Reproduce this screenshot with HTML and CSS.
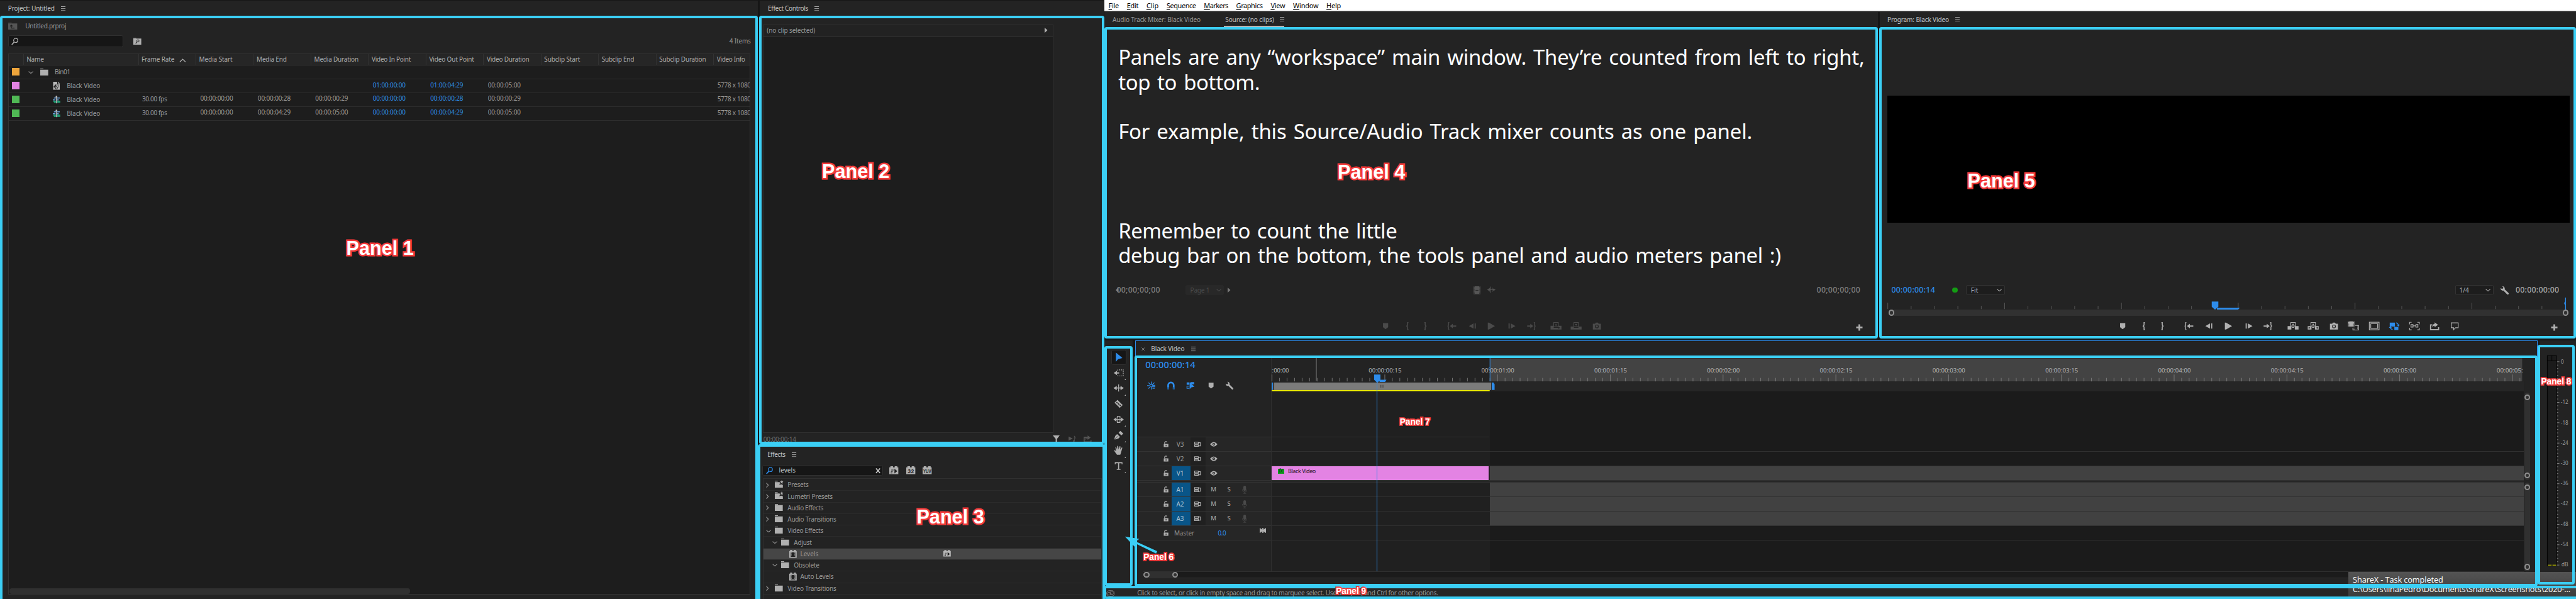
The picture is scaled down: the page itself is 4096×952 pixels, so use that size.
FILE: index.html
```html
<!DOCTYPE html>
<html lang="en">
<head>
<meta charset="utf-8">
<title>Workspace panels</title>
<link rel="stylesheet" href="styles.css">
</head>
<body>
<svg class="defs" width="0" height="0" aria-hidden="true">
  <symbol id="burger" viewBox="0 0 8 8"><path d="M0 .5h8M0 4h8M0 7.5h8" stroke="currentColor" stroke-width="1" fill="none"/></symbol>
  <symbol id="search" viewBox="0 0 12 13"><circle cx="7.6" cy="4.6" r="3.6" fill="none" stroke="currentColor" stroke-width="1.3"/><path d="M5 7.5L.8 12" stroke="currentColor" stroke-width="1.8"/></symbol>
  <symbol id="folder" viewBox="0 0 14 12"><path d="M0 0h5.500v1H0zM0 2h14v10H0z" fill="currentColor"/></symbol>
  <symbol id="folderstar" viewBox="0 0 15 13"><path d="M0 1.500h5v1H0zM0 3.500h8l1 1-1 4 3-1 3 1V13H0z" fill="currentColor"/><path d="M12 0l.9 2.300H15l-1.700 1.500.7 2.400-2-1.400-2 1.400.7-2.400L9 2.300h2.200z" fill="currentColor"/></symbol>
  <symbol id="folderup" viewBox="0 0 16 12"><path d="M0 0h6v1H0zM0 1.500h16V12H0z" fill="currentColor"/><path d="M5.500 4.500V9.500H11M3.500 6.300l2-2 2 2" stroke="#1d1d1d" stroke-width="1.300" fill="none"/></symbol>
  <symbol id="foldersearch" viewBox="0 0 14 12"><path d="M0 0h5v1H0zM0 1.500h14V12H0z" fill="currentColor"/><circle cx="8" cy="5.500" r="2" fill="none" stroke="#222"/><path d="M6.700 7L4 10" stroke="#222" stroke-width="1.300"/></symbol>
  <symbol id="down" viewBox="0 0 9 5"><path d="M.6.600l3.900 3.300L8.400.6" stroke="currentColor" stroke-width="1.200" fill="none"/></symbol>
  <symbol id="up" viewBox="0 0 12 7"><path d="M1 6l5-4.800L11 6" stroke="currentColor" stroke-width="1.500" fill="none"/></symbol>
  <symbol id="right" viewBox="0 0 5 9"><path d="M.6.600l3.500 3.900L.6 8.400" stroke="currentColor" stroke-width="1.200" fill="none"/></symbol>
  <symbol id="tri" viewBox="0 0 5 9"><path d="M0 0v9l5-4.500z" fill="currentColor"/></symbol>
  <symbol id="matte" viewBox="0 0 12 14"><path d="M0 0h7v4h4.500v10H0z" fill="currentColor"/><path d="M8.500 0v3H12z" fill="currentColor"/><path d="M1 9l3-4 1 1-2 4zM4 5.500h5M9 5v5" stroke="#222" fill="#222" stroke-width=".8"/><circle cx="5.500" cy="10.500" r="2" fill="none" stroke="#222" stroke-width="1.200"/></symbol>
  <symbol id="seq" viewBox="0 0 14 14"><path d="M2 4h4M8 4h5M0 7.500h5M8 7.500h3" stroke="#6da3dc" stroke-width="1.800"/><path d="M1 10h5M8 10h6M2 12.500h4M8 12.500h6" stroke="#25c48e" stroke-width="1.600"/><path d="M6.800 0v14" stroke="#ccc" stroke-width="1.500"/><path d="M5.300 0h3v3h-3z" fill="#bbb"/></symbol>
  <symbol id="brick" viewBox="0 0 16 14"><path d="M2 0h4.500v2h3V0H14v2h2v12H0V2h2z" fill="currentColor"/></symbol>
  <symbol id="brickfast" viewBox="0 0 16 14"><path d="M2 0h4.500v2h3V0H14v2h2v12H0V2h2z" fill="currentColor"/><path d="M9 4.500v8l5-4zM3.500 6h4v1.200h-4zM3 8.500h3v1.200H3zM2.500 11h3v1.200h-3z" fill="#222"/></symbol>
  <symbol id="leaf" viewBox="0 0 13 14"><path d="M1.500 0H5v2h3V0h3.500v2H13v12H0V2h1.500z" fill="currentColor"/><path d="M2.500 4h8v8h-8z" fill="#222"/><path d="M3.500 4.500v7M9.500 4.500v7" stroke="#aaa" stroke-dasharray="1.500 1"/></symbol>
  <symbol id="filter" viewBox="0 0 14 13"><path d="M0 0h12L7.300 6v6H5V6z" fill="currentColor"/><path d="M9.500 11.500H14" stroke="currentColor"/></symbol>
  <symbol id="playnote" viewBox="0 0 15 12"><path d="M0 2v8l8-4z" fill="currentColor"/><path d="M11 11V1c1 2.500 3 2 3 5" stroke="currentColor" fill="none"/><circle cx="10" cy="10.500" r="1.500" fill="currentColor"/></symbol>
  <symbol id="export" viewBox="0 0 16 14"><path d="M5 4H1v9h14V9.500" stroke="currentColor" stroke-width="2" fill="none"/><path d="M8 0l6 4.500-6 4.500V6.500H4.500v3h-1V3H8z" fill="currentColor"/></symbol>
  <symbol id="film" viewBox="0 0 12 14"><path d="M0 0h12v14H0z" fill="currentColor"/><path d="M1.200 0v14M10.800 0v14" stroke="#222" stroke-dasharray="1.200 1.200"/><path d="M3.500 7h5" stroke="#222"/></symbol>
  <symbol id="wave" viewBox="0 0 14 12"><path d="M0 6h14M1.500 4v4M4 3v6M6 .5v11M8.500 2.500v7M10.500 4v4M12.500 5v2" stroke="currentColor" stroke-width="1.100"/></symbol>
  <symbol id="marker" viewBox="0 0 20 20"><path d="M5.500 5h9v7L10 15.500 5.500 12z" fill="currentColor"/></symbol>
  <symbol id="in" viewBox="0 0 20 20"><path d="M11.500 4H10v4.500L8.500 10l1.500 1.500V16h1.500" stroke="currentColor" stroke-width="1.700" fill="none"/></symbol>
  <symbol id="out" viewBox="0 0 20 20"><path d="M8.500 4H10v4.500l1.500 1.500-1.500 1.500V16H8.500" stroke="currentColor" stroke-width="1.700" fill="none"/></symbol>
  <symbol id="goin" viewBox="0 0 20 20"><path d="M6 4H4.800v4.500L3.500 10l1.300 1.500V16H6" stroke="currentColor" stroke-width="1.500" fill="none"/><path d="M7 10l5-4v3h6v2.200h-6V14z" fill="currentColor"/></symbol>
  <symbol id="goout" viewBox="0 0 20 20"><path d="M14 4h1.200v4.500l1.300 1.500-1.300 1.500V16H14" stroke="currentColor" stroke-width="1.500" fill="none"/><path d="M13 10L8 6v3H2.500v2.200H8V14z" fill="currentColor"/></symbol>
  <symbol id="back" viewBox="0 0 20 20"><path d="M12 5.500v9L4 10zM14 5.500h2v9h-2z" fill="currentColor"/></symbol>
  <symbol id="play" viewBox="0 0 20 20"><path d="M4 4h2l10.500 6L6 16H4z" fill="currentColor"/></symbol>
  <symbol id="fwd" viewBox="0 0 20 20"><path d="M8 5.500v9l8-4.500zM4 5.500h2v9H4z" fill="currentColor"/></symbol>
  <symbol id="insert" viewBox="0 0 20 20"><path d="M.5 9.500H6V13h8V9.500h5.500V16H.5z" fill="currentColor"/><path d="M6 4h8v7H6z" fill="none" stroke="currentColor" stroke-width="1.200"/><path d="M7.800 7h4.400L10 10z" fill="currentColor"/><path d="M14 11v4l3-2z" fill="#222"/></symbol>
  <symbol id="over" viewBox="0 0 20 20"><path d="M.5 11H6v2h8v-2h5.500v5H.5z" fill="currentColor"/><path d="M6 4h8v7H6z" fill="none" stroke="currentColor" stroke-width="1.200"/><path d="M7.800 6.500h4.400L10 9.500z" fill="currentColor"/></symbol>
  <symbol id="lift" viewBox="0 0 20 20"><path d="M.5 10H7v6H.5zM13 10h6.500v6H13z" fill="currentColor"/><path d="M6 4h8v6h-8zM8 12.500h4" fill="none" stroke="currentColor" stroke-width="1.200"/><path d="M7.800 8.800h4.400L10 5.800z" fill="currentColor"/></symbol>
  <symbol id="extract" viewBox="0 0 20 20"><path d="M.5 10H7v6H.5zM13 10h6.500v6H13z" fill="currentColor"/><path d="M6 4h8v6h-8zM8 12.500h4" fill="none" stroke="currentColor" stroke-width="1.200"/><path d="M7.800 8.800h4.400L10 5.800z" fill="currentColor"/><path d="M2 11.500v3.500l3-1.800zM18 11.500v3.500l-3-1.800z" fill="#222"/></symbol>
  <symbol id="camera" viewBox="0 0 20 20"><path d="M3 6h4l1-2h4l1 2h4v10H3z" fill="currentColor"/><circle cx="10" cy="10.800" r="2.600" fill="none" stroke="#222" stroke-width="1.300"/></symbol>
  <symbol id="compare" viewBox="0 0 20 20"><path d="M.5 2h11v9H.5z" fill="currentColor"/><path d="M2 2v9M10 2v9" stroke="#222" stroke-dasharray="1.200 1.200"/><path d="M13 9h6v8H9v-4" fill="none" stroke="currentColor" stroke-width="1.200"/><path d="M11 13v4M17 9v8" stroke="currentColor" stroke-dasharray="1.200 1.200"/></symbol>
  <symbol id="frame" viewBox="0 0 20 20"><path d="M1.500 3.500h17v13h-17zM4 6h12v8H4z" fill="none" stroke="currentColor" stroke-width="1.300"/></symbol>
  <symbol id="proxy" viewBox="0 0 20 20"><path d="M2 4h9v7H2zM10 11.500h7V17h-7z" fill="currentColor"/><path d="M13 4.500c3 .5 4 2 4 5M7 16c-3-.5-4-2-4-4" fill="none" stroke="currentColor" stroke-width="1.500"/><path d="M14.500 8h5L17 11zM.5 13h5L3 10z" fill="currentColor"/></symbol>
  <symbol id="vr" viewBox="0 0 20 20"><path d="M5 3.500H1.500V7M15 3.500h3.500V7M5 16.500H1.500V13M15 16.500h3.500V13" fill="none" stroke="currentColor" stroke-width="1.200"/><path d="M4 7.500h3.500v4.500H4zM12.500 7.500H16v4.500h-3.500zM7.500 9.800h5" fill="none" stroke="currentColor" stroke-width="1.300"/></symbol>
  <symbol id="exp2" viewBox="0 0 20 20"><path d="M6 8H3v8.200h14V12" stroke="currentColor" stroke-width="2" fill="none"/><path d="M10 3.500l6 4.300-6 4.200V9.500c-2 0-3 .8-4 2.500 0-4 2-5.500 4-5.700z" fill="currentColor"/></symbol>
  <symbol id="comment" viewBox="0 0 20 20"><path d="M4 4.500h12v8.500h-4.500L8 16.500V13H4z" fill="none" stroke="currentColor" stroke-width="1.300"/></symbol>
  <symbol id="plus" viewBox="0 0 12 12"><path d="M6 .5v11M.5 6h11" stroke="currentColor" stroke-width="3"/></symbol>
  <symbol id="wrench" viewBox="0 0 16 16"><path d="M1 4.500a4 4 0 0 0 5 4L12.500 15a1.700 1.700 0 0 0 2.400-2.400L8.300 6.200A4 4 0 0 0 4 1l2 2.200-.6 1.700-1.900.6z" fill="currentColor"/></symbol>
  <symbol id="select" viewBox="0 0 20 20"><path d="M5 1.500v17l4-5 8-2z" fill="currentColor"/></symbol>
  <symbol id="track" viewBox="0 0 20 20"><path d="M1 10l6-4v3h4v2.200H7V14z" fill="currentColor"/><path d="M8.500 6V4.500h10v11h-10V14" fill="none" stroke="currentColor" stroke-width="1.300" stroke-dasharray="2 1.500"/></symbol>
  <symbol id="ripple" viewBox="0 0 20 20"><path d="M10 3.500v13" stroke="currentColor" stroke-width="1.500"/><path d="M.5 10l6-4v3H9v2H6.500v3zM19.500 10l-6-4v3H11v2h2.500v3z" fill="currentColor"/></symbol>
  <symbol id="razor" viewBox="0 0 20 20"><path d="M8 3l9.500 9.500-5.500 5L2.500 8z" fill="currentColor"/><path d="M6 7l8 7" stroke="#222" stroke-width="1.800" stroke-dasharray="3 1"/></symbol>
  <symbol id="slip" viewBox="0 0 20 20"><path d="M7.500 8.500v-4h5v4M7.500 11.500v4h5v-4M5 10h10" fill="none" stroke="currentColor" stroke-width="1.400"/><path d="M.5 10l5.500-4v8zM19.500 10L14 6v8z" fill="currentColor"/></symbol>
  <symbol id="pen" viewBox="0 0 20 20"><path d="M2 17.500c1-5 2-8 5.500-9.500l5 5c-2 3-5 4.500-10.500 4.500zM10 5.500l3-3.500 5.500 5-3.500 3.500z" fill="currentColor"/><path d="M3 17l5-5" stroke="#222"/></symbol>
  <symbol id="hand" viewBox="0 0 20 20"><path d="M7 18c-2-3-4-5-5.500-8 1.500-.8 3 .5 4 2L4 4.500c1.500-.7 2 .3 3 4.500L7.500 2c1.500-.5 2 0 2.300 6.500L12 2.200c1.500 0 1.600.8.700 6.800L15.800 4.500c1.500.3 1 1.500-.3 5.500C14.800 13 14 15 13 18z" fill="currentColor"/></symbol>
  <symbol id="type" viewBox="0 0 20 20"><path d="M3 3h14v4h-1.500V5H11v10.500h2.500V17h-7v-1.500H9V5H4.500v2H3z" fill="currentColor"/></symbol>
  <symbol id="snapseq" viewBox="0 0 16 16"><path d="M8 .5V7M8 9v6.500M2.500 2.500L7 7M13.500 2.500L9.500 6.500M2.500 13.500L6.500 9.500M0 8h5M9 7.500h6M9 10h6M10 13h4" stroke="currentColor" stroke-width="1.500"/></symbol>
  <symbol id="magnet" viewBox="0 0 14 14"><path d="M2.500 13V6.500a4.500 4.500 0 0 1 9 0V13" fill="none" stroke="currentColor" stroke-width="2.800"/><path d="M1 11.500h3M10 11.500h3" stroke="#1c5a96" stroke-width="3.500"/></symbol>
  <symbol id="linked" viewBox="0 0 16 16"><path d="M1 2h5v4.500H1zM8 1.500h7v4H8z" fill="currentColor"/><path d="M6 9H1.500v4H6" fill="none" stroke="currentColor" stroke-width="1.300"/><path d="M6.500 2v13l3-3.500 6-1.500z" fill="currentColor"/></symbol>
  <symbol id="lock" viewBox="0 0 9 11"><path d="M.5 4.800h8v5.700h-8z" fill="currentColor"/><path d="M2 5V2.800C2 .8 5.500.3 6 1.800" fill="none" stroke="currentColor" stroke-width="1.300"/><path d="M4.500 6.500v2.500" stroke="#222" stroke-width="1.300"/></symbol>
  <symbol id="sync" viewBox="0 0 13 9"><path d="M.6.600h7v3h-7zM.6 5.400h7v3h-7zM7.600 1.500h4v6h-4" fill="none" stroke="currentColor" stroke-width="1.300"/></symbol>
  <symbol id="eye" viewBox="0 0 13 9"><path d="M0 4.500Q6.500-3.500 13 4.500 6.500 12.500 0 4.500z" fill="currentColor"/><circle cx="6.500" cy="4.500" r="2.300" fill="#222"/><circle cx="6.500" cy="4.500" r="1" fill="currentColor"/></symbol>
  <symbol id="mic" viewBox="0 0 9 14"><rect x="2.200" y="0" width="4.600" height="9" rx="2.300" fill="currentColor"/><path d="M.5 6.500c0 6 8 6 8 0M4.500 11v2.500M2 13.500h5" fill="none" stroke="currentColor"/></symbol>
  <symbol id="bow" viewBox="0 0 11 9"><path d="M0 0l4.500 3V0h2v3L11 0v9L6.500 6v3h-2V6L0 9z" fill="currentColor"/></symbol>
  <symbol id="cc" viewBox="0 0 15 11"><rect x=".6" y=".6" width="13.800" height="9.800" rx="4.900" fill="none" stroke="currentColor"/><circle cx="5" cy="6" r="2.600" fill="none" stroke="currentColor"/><circle cx="9.500" cy="5" r="3" fill="none" stroke="currentColor"/><path d="M5.500 3l5 5" stroke="currentColor"/></symbol>
</svg>

<div class="app">
  <section class="project">
    <div class="tab"><span class="t lit" data-w="81">Project: Untitled</span><svg class="burger"><use href="#burger"/></svg></div>
    <div class="crumb"><svg class="i-up"><use href="#folderup"/></svg><span class="t" data-w="71">Untitled.prproj</span></div>
    <div class="findrow"><div class="find"><svg class="i-search"><use href="#search"/></svg></div><svg class="i-fs"><use href="#foldersearch"/></svg><span class="t items" data-w="37">4 Items</span></div>
    <div class="table">
      <div class="tr th"><i></i><b><span class="t" data-w="30">Name</span></b><b><span class="t" data-w="57">Frame Rate</span><svg class="i-sort"><use href="#up"/></svg></b><b><span class="t" data-w="58">Media Start</span></b><b><span class="t" data-w="52">Media End</span></b><b><span class="t" data-w="77">Media Duration</span></b><b><span class="t" data-w="68">Video In Point</span></b><b><span class="t" data-w="78">Video Out Point</span></b><b><span class="t" data-w="74">Video Duration</span></b><b><span class="t" data-w="62">Subclip Start</span></b><b><span class="t" data-w="56">Subclip End</span></b><b><span class="t" data-w="81">Subclip Duration</span></b><b><span class="t" data-w="49">Video Info</span></b></div>
      <div class="tr"><i><em class="sw orange"></em></i><b><svg class="i-down"><use href="#down"/></svg><svg class="i-folder"><use href="#folder"/></svg><span class="t" data-w="27">Bin01</span></b></div>
      <div class="tr"><i><em class="sw pink"></em></i><b class="clipname"><svg class="i-clip"><use href="#matte"/></svg><span class="t" data-w="58">Black Video</span></b><b></b><b></b><b></b><b></b><b class="v blue"><span class="t" data-w="57">01:00:00:00</span></b><b class="v blue"><span class="t" data-w="57">01:00:04:29</span></b><b class="v"><span class="t" data-w="57">00:00:05:00</span></b><b></b><b></b><b></b><b class="w"><span class="t" data-w="58">5778 x 1080</span></b></div>
      <div class="tr"><i><em class="sw green"></em></i><b class="clipname"><svg class="i-clip"><use href="#seq"/></svg><span class="t" data-w="58">Black Video</span></b><b class="w"><span class="t" data-w="43">30.00 fps</span></b><b class="v"><span class="t" data-w="57">00:00:00:00</span></b><b class="v"><span class="t" data-w="57">00:00:00:28</span></b><b class="v"><span class="t" data-w="57">00:00:00:29</span></b><b class="v blue"><span class="t" data-w="57">00:00:00:00</span></b><b class="v blue"><span class="t" data-w="57">00:00:00:28</span></b><b class="v"><span class="t" data-w="57">00:00:00:29</span></b><b></b><b></b><b></b><b class="w"><span class="t" data-w="58">5778 x 1080</span></b></div>
      <div class="tr"><i><em class="sw green"></em></i><b class="clipname"><svg class="i-clip"><use href="#seq"/></svg><span class="t" data-w="58">Black Video</span></b><b class="w"><span class="t" data-w="43">30.00 fps</span></b><b class="v"><span class="t" data-w="57">00:00:00:00</span></b><b class="v"><span class="t" data-w="57">00:00:04:29</span></b><b class="v"><span class="t" data-w="57">00:00:05:00</span></b><b class="v blue"><span class="t" data-w="57">00:00:00:00</span></b><b class="v blue"><span class="t" data-w="57">00:00:04:29</span></b><b class="v"><span class="t" data-w="57">00:00:05:00</span></b><b></b><b></b><b></b><b class="w"><span class="t" data-w="58">5778 x 1080</span></b></div>
      <div class="hthumb"></div>
    </div>
  </section>

  <section class="middle">
    <div class="tab"><span class="t lit" data-w="70">Effect Controls</span><svg class="burger"><use href="#burger"/></svg></div>
    <div class="ecbox"><div class="echead"><span class="t" data-w="84">(no clip selected)</span><svg class="i-tri"><use href="#tri"/></svg></div></div>
    <div class="ecfoot"><span class="t" data-w="57">00:00:00:14</span><span class="ecicons"><svg class="i-filter"><use href="#filter"/></svg><svg class="i-note"><use href="#playnote"/></svg><svg class="i-export"><use href="#export"/></svg></span></div>
    <div class="tab fxtab"><span class="t lit" data-w="31">Effects</span><svg class="burger"><use href="#burger"/></svg></div>
    <div class="fxfind"><div class="find"><svg class="i-search blue"><use href="#search"/></svg><span class="t lit" data-w="29">levels</span><svg class="i-x" viewBox="0 0 9 9"><path d="M1 .5l7 8M8 .5l-7 8" stroke="#ccc" stroke-width="1.800"/></svg></div>
      <svg class="i-brick"><use href="#brickfast"/></svg>
      <svg class="i-brick" viewBox="0 0 16 14"><use href="#brick" width="16" height="14"/><text x="8" y="11.500" class="bt" textLength="11">32</text></svg>
      <svg class="i-brick" viewBox="0 0 16 14"><use href="#brick" width="16" height="14"/><text x="8" y="11.500" class="bt" textLength="14" lengthAdjust="spacingAndGlyphs">YUV</text></svg></div>
    <div class="fxlist">
      <div class="fx"><svg class="i-right"><use href="#right"/></svg><svg class="i-star"><use href="#folderstar"/></svg><span class="t" data-w="36.500">Presets</span></div>
      <div class="fx"><svg class="i-right"><use href="#right"/></svg><svg class="i-star"><use href="#folderstar"/></svg><span class="t" data-w="78.500">Lumetri Presets</span></div>
      <div class="fx"><svg class="i-right"><use href="#right"/></svg><svg class="i-folder"><use href="#folder"/></svg><span class="t" data-w="62">Audio Effects</span></div>
      <div class="fx"><svg class="i-right"><use href="#right"/></svg><svg class="i-folder"><use href="#folder"/></svg><span class="t" data-w="84.500">Audio Transitions</span></div>
      <div class="fx"><svg class="i-down"><use href="#down"/></svg><svg class="i-folder"><use href="#folder"/></svg><span class="t" data-w="62">Video Effects</span></div>
      <div class="fx sub"><svg class="i-down"><use href="#down"/></svg><svg class="i-folder"><use href="#folder"/></svg><span class="t" data-w="31">Adjust</span></div>
      <div class="fx leaf on"><svg class="i-leaf"><use href="#leaf"/></svg><span class="t" data-w="31.500">Levels</span><svg class="i-accel"><use href="#brickfast"/></svg></div>
      <div class="fx sub"><svg class="i-down"><use href="#down"/></svg><svg class="i-folder"><use href="#folder"/></svg><span class="t" data-w="44">Obsolete</span></div>
      <div class="fx leaf"><svg class="i-leaf"><use href="#leaf"/></svg><span class="t" data-w="58">Auto Levels</span></div>
      <div class="fx"><svg class="i-right"><use href="#right"/></svg><svg class="i-folder"><use href="#folder"/></svg><span class="t" data-w="84.500">Video Transitions</span></div>
    </div>
  </section>

  <main class="right">
    <nav class="menu"><span class="t" data-w="18"><u>F</u>ile</span><span class="t" data-w="20"><u>E</u>dit</span><span class="t" data-w="21"><u>C</u>lip</span><span class="t" data-w="51"><u>S</u>equence</span><span class="t" data-w="42"><u>M</u>arkers</span><span class="t" data-w="46"><u>G</u>raphics</span><span class="t" data-w="25"><u>V</u>iew</span><span class="t" data-w="44"><u>W</u>indow</span><span class="t" data-w="25"><u>H</u>elp</span></nav>
    <div class="monitors">
      <section class="source">
        <div class="tab"><span class="t" data-w="153">Audio Track Mixer: Black Video</span><span class="active"><span class="t lit" data-w="84.500">Source: (no clips)</span><svg class="burger"><use href="#burger"/></svg></span></div>
        <div class="notes"><p class="t" data-w="1297">Panels are any “workspace” main window. They’re counted from left to right,</p><p class="t" data-w="246">top to bottom.</p><p>&nbsp;</p><p class="t" data-w="1102">For example, this Source/Audio Track mixer counts as one panel.</p><p>&nbsp;</p><p>&nbsp;</p><p>&nbsp;</p><p class="t" data-w="484.500">Remember to count the little</p><p class="t" data-w="1152">debug bar on the bottom, the tools panel and audio meters panel :)</p></div>
        <div class="timerow"><span class="startcode"><span class="t tc" data-w="76">00;00;00;00</span><svg class="i-left" viewBox="0 0 5 9"><path d="M5 0v9L0 4.500z" fill="currentColor"/></svg></span><span class="drop page"><span class="t" data-w="33.500">Page 1</span><svg class="i-down"><use href="#down"/></svg></span><svg class="i-tri"><use href="#tri"/></svg><svg class="i-film"><use href="#film"/></svg><svg class="i-wave"><use href="#wave"/></svg><span class="t tc end" data-w="76">00;00;00;00</span></div>
        <div class="buttons"><svg><use href="#marker"/></svg><svg><use href="#in"/></svg><svg><use href="#out"/></svg><svg><use href="#goin"/></svg><svg><use href="#back"/></svg><svg><use href="#play"/></svg><svg><use href="#fwd"/></svg><svg><use href="#goout"/></svg><svg><use href="#insert"/></svg><svg><use href="#over"/></svg><svg><use href="#camera"/></svg><svg class="i-plus"><use href="#plus"/></svg></div>
      </section>
      <section class="program">
        <div class="tab"><span class="t lit" data-w="107">Program: Black Video</span><svg class="burger"><use href="#burger"/></svg></div>
        <div class="screen"></div>
        <div class="timerow"><span class="t tc blue" data-w="76">00:00:00:14</span><em class="dot"></em><span class="drop"><span class="t" data-w="13">Fit</span><svg class="i-down"><use href="#down"/></svg></span><span class="drop quarter"><span class="t" data-w="17">1/4</span><svg class="i-down"><use href="#down"/></svg></span><svg class="i-wrench"><use href="#wrench"/></svg><span class="t tc" data-w="76">00:00:00:00</span></div>
        <svg class="pruler" viewBox="0 0 1210 22" width="1210" height="22"><path id="pticks" stroke="#5c5c5c" fill="none"/><path d="M586 18.500h40l-3 3.500h-37z" fill="#2d8ceb"/><path d="M577 8h11.500v9l-5 4.500h-1.500l-5-4.500z" fill="#2d8ceb"/><path d="M1192.500 1v21" stroke="#2d8ceb" stroke-width="1.500"/><path d="M1192 8l-2 3 2 3" stroke="#2d8ceb" fill="none"/></svg>
        <div class="pbar"><em class="ring"></em><em class="ring"></em></div>
        <div class="buttons"><svg><use href="#marker"/></svg><svg><use href="#in"/></svg><svg><use href="#out"/></svg><svg><use href="#goin"/></svg><svg><use href="#back"/></svg><svg><use href="#play"/></svg><svg><use href="#fwd"/></svg><svg><use href="#goout"/></svg><svg><use href="#lift"/></svg><svg><use href="#extract"/></svg><svg><use href="#camera"/></svg><svg><use href="#compare"/></svg><svg><use href="#frame"/></svg><svg class="blue"><use href="#proxy"/></svg><svg><use href="#vr"/></svg><svg><use href="#exp2"/></svg><svg><use href="#comment"/></svg><svg class="i-plus"><use href="#plus"/></svg></div>
      </section>
    </div>

    <div class="lower">
      <section class="tools"><span class="tool on"><svg class="blue"><use href="#select"/></svg></span><span class="tool more"><svg><use href="#track"/></svg></span><span class="tool more"><svg><use href="#ripple"/></svg></span><span class="tool"><svg><use href="#razor"/></svg></span><span class="tool more"><svg><use href="#slip"/></svg></span><span class="tool more"><svg><use href="#pen"/></svg></span><span class="tool more"><svg><use href="#hand"/></svg></span><span class="tool more"><svg><use href="#type"/></svg></span></section>

      <section class="timeline">
        <div class="tab"><svg class="i-close" viewBox="0 0 6 6"><path d="M.5.500l5 5M5.500.500l-5 5" stroke="#999"/></svg><span class="t lit" data-w="58">Black Video</span><svg class="burger"><use href="#burger"/></svg></div>
        <div class="tbody">
          <div class="heads">
            <div class="thead"><span class="t bigtc" data-w="87">00:00:00:14</span><div class="ticons"><svg class="blue"><use href="#snapseq"/></svg><svg class="blue"><use href="#magnet"/></svg><svg class="blue"><use href="#linked"/></svg><svg class="mk"><use href="#marker"/></svg><svg><use href="#wrench"/></svg></div></div>
            <div class="hrow top"></div>
            <div class="hrow"><svg class="i-lock"><use href="#lock"/></svg><span class="tn">V3</span><span class="sy"><svg><use href="#sync"/></svg></span><svg class="i-eye"><use href="#eye"/></svg></div>
            <div class="hrow"><svg class="i-lock"><use href="#lock"/></svg><span class="tn">V2</span><span class="sy"><svg><use href="#sync"/></svg></span><svg class="i-eye"><use href="#eye"/></svg></div>
            <div class="hrow"><svg class="i-lock"><use href="#lock"/></svg><span class="tn on">V1</span><span class="sy"><svg><use href="#sync"/></svg></span><svg class="i-eye"><use href="#eye"/></svg></div>
            <div class="hrow gap"></div>
            <div class="hrow"><svg class="i-lock"><use href="#lock"/></svg><span class="tn on">A1</span><span class="sy"><svg><use href="#sync"/></svg></span><span class="ms">M</span><span class="ms">S</span><svg class="i-mic"><use href="#mic"/></svg></div>
            <div class="hrow"><svg class="i-lock"><use href="#lock"/></svg><span class="tn on">A2</span><span class="sy"><svg><use href="#sync"/></svg></span><span class="ms">M</span><span class="ms">S</span><svg class="i-mic"><use href="#mic"/></svg></div>
            <div class="hrow"><svg class="i-lock"><use href="#lock"/></svg><span class="tn on">A3</span><span class="sy"><svg><use href="#sync"/></svg></span><span class="ms">M</span><span class="ms">S</span><svg class="i-mic"><use href="#mic"/></svg></div>
            <div class="hrow master"><svg class="i-lock"><use href="#lock"/></svg><span class="t" data-w="35">Master</span><span class="t blue" data-w="14">0.0</span><svg class="i-bow"><use href="#bow"/></svg></div>
          </div>
          <div class="lanes">
            <svg class="ruler" id="ruler" viewBox="0 0 2177 62" width="2177" height="62">
              <rect x="379" y="5" width="1795" height="40" fill="#434343"/>
              <rect x="379" y="45" width="1798" height="17" fill="#262626"/>
              <path id="tticks" stroke="#7d7d7d" fill="none"/>
              <path d="M77.500 4v40" stroke="#8a8a8a"/>
              <g id="tlabels" class="rl"></g>
              <path d="M379.500 4v41" stroke="#2d8ceb"/><path d="M379 20l-2 3 2 3" stroke="#2d8ceb" fill="none"/>
              <path d="M0 47h2v13H0zM382.500 47h3l2 3v10h-5z" fill="#2d8ceb"/>
              <rect x="3.500" y="47" width="378" height="13" fill="#7b7b7b"/>
              <rect x="0" y="60" width="379" height="2" fill="#f2f200"/>
              <path d="M189.500 51v5M191.500 51v5M193.500 51v5" stroke="#333" stroke-width=".8"/>
              <path d="M185 42h14.500l-2.500 4h-9z" fill="#2d8ceb"/>
              <path d="M178 33h11v9l-5 5h-1l-5-5z" fill="#2d8ceb"/>
            </svg>
            <div class="lane top"><em></em></div>
            <div class="lane"></div><div class="lane"></div>
            <div class="lane full"><div class="clip"><span class="badge">fx</span><span class="t" data-w="48">Black Video</span></div></div>
            <div class="lane gap"></div>
            <div class="lane full"></div><div class="lane full"></div><div class="lane full"></div>
            <div class="lane"></div>
            <div class="lane rest"></div>
            <em class="playhead"></em>
          </div>
          <div class="vbars"><div class="vbar one"><em class="ring"></em><em class="ring"></em></div><div class="vbar two"><em class="ring"></em><em class="ring"></em></div></div>
        </div>
        <div class="hbar"><div class="hb"><em class="ring"></em><em class="ring"></em></div></div>
      </section>

      <section class="meters"><svg viewBox="0 0 63 430" width="63" height="430">
        <rect x="13.500" y="26.500" width="16" height="365" fill="#1b1b1b" stroke="#000"/><path d="M13 35.500h17M21.500 26v9" stroke="#000"/>
        <path id="mticks" stroke="#8a8a8a" fill="none"/>
        <path d="M14.500 390.500h6.500M22.500 390.500h6.500" stroke="#f2f200"/>
        <g id="mlabels" class="ml"></g></svg></section>
    </div>

    <footer class="status"><svg class="i-cc"><use href="#cc"/></svg><span class="t" data-w="523">Click to select, or click in empty space and drag to marquee select. Use Shift, Alt, and Ctrl for other options.</span></footer>
  </main>

  <div class="toast"><span class="t" data-w="157">ShareX - Task completed</span><span class="t" data-w="378">C:\Users\linaPedro\Documents\ShareX\Screenshots\2020-...</span></div>

  <div class="box b1"></div><div class="box b2"></div><div class="box b3"></div><div class="box b4"></div><div class="box b5"></div><div class="box b9"></div><div class="box b6"></div><div class="box b7"></div><div class="box b8"></div>
  <svg class="arrow" viewBox="0 0 60 34" width="60" height="34"><path d="M2 3l25 4-6.500 4.500L58 28.500l-2 4L19 14.500v6.500z" fill="#3bcff5"/></svg>
  <span class="label l1">Panel 1</span><span class="label l2">Panel 2</span><span class="label l3">Panel 3</span><span class="label l4">Panel 4</span><span class="label l5">Panel 5</span>
  <span class="label small l6">Panel 6</span><span class="label small l7">Panel 7</span><span class="label small l8">Panel 8</span><span class="label small l9">Panel 9</span>
</div>
<script src="app.js"></script>
</body>
</html>
```
FILE: styles.css
```css
*{box-sizing:border-box}
html,body{margin:0;background:#161616;overflow:hidden}
.defs{position:absolute}
svg{display:block;flex:none;overflow:visible}
em,i,b{font-style:normal;font-weight:400;display:block}
p{margin:0}
.app{zoom:.914694;position:relative;width:4478px;height:1041px;overflow:hidden;display:grid;grid-template-columns:1317px 603px 2558px;background:#161616;color:#999;font:11px/14px "Noto Sans","Open Sans",sans-serif}
.t{display:inline-block;white-space:nowrap;flex:none}
.lit{color:#c4c4c4}
.blue{color:#2d8ceb!important}
.burger{width:8px;height:8px;margin-left:11px;color:#b8b8b8}
.tab{display:flex;align-items:center;height:28px;padding-left:14px}
.find{display:flex;align-items:center;background:#161616;border:1px solid #303030;border-radius:3px}
.i-search{width:12px;height:13px;margin-left:5px;color:#b0b0b0}
.i-down{width:9px;height:5px}
.i-right{width:5px;height:9px}
.i-folder{width:14px;height:12px;color:#b0b0b0}
.ring{width:10px;height:10px;border:2.2px solid #8f8f8f;border-radius:50%;flex:none}

.project{border-top:1px solid #161616;background:#232323;display:flex;flex-direction:column;padding-bottom:8px}
.crumb{display:flex;align-items:center;height:22px;margin:5px 0 0 14px}
.i-up{width:16px;height:12px;color:#555;margin-right:14px}
.findrow{display:flex;align-items:center;height:21px;margin:5px 12px 0 14px}
.project .find{width:200px;height:21px}
.i-fs{width:14px;height:12px;margin-left:18px;color:#b0b0b0}
.items{margin-left:auto}
.table{flex:1;margin:11px 13px 0 14px;border:1px solid #333;background:#1d1d1d;display:flex;flex-direction:column;overflow:hidden}
.tr{display:grid;grid-template-columns:26px 200px repeat(10,100px) 1fr;height:24px;border-bottom:1px solid #2d2d2d}
.tr>*{display:flex;align-items:center;padding-left:6px;min-width:0}
.tr>b:last-child{overflow:hidden}
.th{height:20px;background:#262626;color:#adadad;border-color:#353535}
.th>*{border-right:1px solid #333;padding-left:5px}
.th>*:last-child{border-right:0}
.i-sort{width:12px;height:7px;margin:3px 0 0 8px}
.sw{width:13px;height:13px;margin-top:-1px}
.orange{background:#eda43b}.pink{background:#e383e3}.green{background:#50b955}
.tr b .i-down{margin:0 12px 0 2px;width:9px}
.tr b .i-folder{margin-right:11px}
.tr .clipname{padding-left:51px}
.i-clip{width:13px;height:14px;margin-right:11px;color:#b8b8b8}
.tr .v{padding:0 0 4px 7px}.tr .w{padding:0 0 2px 6px}
.hthumb{margin:auto 0 0 1px;width:697px;height:10px;border-radius:4px;background:#303030}

.middle{border-top:1px solid #161616;background:#232323;margin:0 1px 0 4px;overflow:hidden;display:flex;flex-direction:column}
.ecbox{margin:13px 0 0 5px;width:505px;height:710px;border:1px solid #303030;background:#1d1d1d;flex:none}
.echead{height:21px;display:flex;align-items:center;padding:0 9px 0 6px;background:#222;border-bottom:1px solid #333}
.i-tri{width:5px;height:9px;color:#b0b0b0}
.echead .i-tri{margin-left:auto}
.ecfoot{display:flex;align-items:center;height:20px;padding-left:6px;margin-top:1px;color:#6c6c6c;flex:none}
.ecicons{display:flex;gap:13px;margin-left:446px;color:#555}
.i-filter{width:14px;height:13px;color:#b0b0b0}.i-note{width:14px;height:11px}.i-export{width:14px;height:12px}
.fxtab{height:20px;margin-top:7px;padding-left:13px;flex:none}
.fxfind{display:flex;align-items:center;height:19px;margin:8px 0 0 4px;flex:none}
.fxfind .find{width:210px;height:19px;margin-right:11px}
.fxfind .i-search{margin-right:11px}
.i-x{width:9px;height:9px;margin:1px 3px 0 auto}
.i-brick{width:16px;height:14px;margin-right:13px;color:#b0b0b0}
.bt{font:700 9.500px "Liberation Sans",sans-serif;text-anchor:middle;fill:#222}
.fxlist{flex:1;width:589px;margin:4px 0 0 5px;border:1px solid #303030;border-bottom:0;padding-top:1px}
.fx{display:flex;align-items:center;height:20px;border-bottom:1px solid #2b2b2b;padding-left:5px}
.fx .i-right{margin-right:10px}.fx .i-down{margin-right:6px}
.fx .i-folder{margin:-2px 8px 0 0}
.i-star{width:15px;height:13px;margin:-4px 7px 0 0;color:#b0b0b0}
.fx.sub{padding-left:16px}.fx.leaf{padding:0 0 1px 45px}
.i-leaf{width:13px;height:14px;margin-right:6px;color:#b0b0b0}
.fx.on{background:#464646}
.i-accel{width:13px;height:14px;margin:-2px 0 0 217px;color:#b8b8b8}

.right{display:flex;flex-direction:column;min-width:0}
.menu{height:20px;background:#fff linear-gradient(#fff 85%,#e4e4e4);color:#000;display:flex;align-items:center;gap:14px;padding-left:7px;font-size:12px}
.menu u{text-underline-offset:2px}
.monitors{display:flex;height:568px;padding-top:1px;gap:4px}
.source,.program{background:#232323;display:flex;flex-direction:column}
.source{width:1344px}.program{width:1210px}
.monitors .tab{height:26px;flex:none}
.program .tab{padding-left:13px}
.active{display:flex;align-items:center;height:26px;margin:0 0 0 41px;padding:0 0 0 2px;border-bottom:2.2px solid #b5b5b5;width:105px}
.active .t{margin-top:2px}.active .burger{margin:2px 0 0 10px}
.notes{margin:31px 0 0 24px;height:387px;font-size:36px;line-height:43px;word-spacing:3px;color:#fff;flex:none}
.notes p{display:block}
.timerow{display:flex;align-items:center;height:20px;flex:none}
.source .timerow{margin-top:29px;padding:0 30px 0 21px;color:#808080}
.startcode{display:flex;align-items:center;position:relative}
.i-left{position:absolute;left:-1px;width:5px;height:9px}
.tc{font-size:13.500px;font-weight:500}
.drop{display:flex;align-items:center;justify-content:space-between;width:67px;height:18px;padding:0 4px 0 7px;border:1px solid #333;border-radius:2px;background:#1d1d1d;color:#b0b0b0}
.page{margin:0 6px 0 44px;background:#282828;border-color:#282828;color:#4a4a4a}
.timerow .i-tri{color:#7a7a7a}
.i-film{width:12px;height:14px;margin-left:423px;color:#555}.i-wave{width:14px;height:12px;margin-left:12px;color:#555}
.end{margin-left:auto}
.buttons{display:grid;align-items:center;height:30px;color:#4a4a4a;flex:none}
.buttons svg{width:20px;height:20px}
.buttons .i-plus{width:12px;height:12px;margin-top:5px;color:#b0b0b0}
.source .buttons{margin:38px 0 0 479px;grid-template-columns:38px 31px 45px 37px 32px 37px 33px 43.500px 34.500px 36px 460px 12px}
.screen{margin:119px 0 0 13px;width:1186px;height:221px;background:#000;flex:none}
.program .timerow{margin-top:107px;padding:0 29px 0 20px;color:#a8a8a8}
.dot{width:9px;height:9px;border-radius:50%;background:#149c14;margin:0 15px 0 30px}
.quarter{margin-left:auto;padding-left:6px}
.i-wrench{width:16px;height:16px;margin:0 11px;color:#b0b0b0}
.pruler{margin-top:2px}
.pbar{display:flex;justify-content:space-between;align-items:center;height:11px;margin:0 13px 0 15px;background:#313131;border-radius:5px}
.program .buttons{margin:3px 0 0 412.500px;color:#b0b0b0;grid-template-columns:37px 31.500px 46px 34.500px 34.500px 36px 33px 43.500px 35px 35.500px 34px 36px 35px 35px 35px 35px 178px 12px}

.lower{display:flex;height:430px;margin-top:4px;gap:4px}
.tools{width:49px;background:#232323;display:flex;flex-direction:column;align-items:center;padding:16px 0 0 1px}
.tool{position:relative;display:grid;place-items:center;width:27px;height:27.100px;color:#b0b0b0}
.tool svg{width:19px;height:19px}
.tool.on{background:#161616;border:1px solid #303030;border-radius:3px;height:26px}
.tool.more::after{content:"";position:absolute;right:1px;bottom:1px;border:solid transparent;border-width:0 0 3px 3px;border-bottom-color:#b0b0b0}
.timeline{width:2438px;background:#232323;border:1px solid #2d8ceb;border-bottom:0;display:flex;flex-direction:column}
.timeline .tab{height:25px;padding:2px 0 0 10px;flex:none}
.i-close{width:6px;height:6px;margin-right:11px}
.timeline .burger{margin-left:12px}
.tbody{display:grid;grid-template-columns:236px 2177px 1fr;height:375px}
.heads{border-right:1px solid #2f2f2f}
.thead{height:62px;padding:5px 0 0 17px}
.bigtc{font-size:16px;font-weight:500;line-height:20px;color:#2d8ceb;display:block}
.ticons{display:grid;grid-template-columns:repeat(5,34px);align-items:center;margin:19px 0 0 3px;color:#b0b0b0}
.ticons svg{width:15px;height:15px}
.ticons .mk{width:19px;height:19px;margin:-2px 0}
.hrow{display:flex;align-items:center;height:25px;padding-left:49px;border-bottom:1px solid #333;background:#262626;color:#b0b0b0}
.hrow.top,.lane.top{height:80px;background-color:#232323}
.hrow.gap,.lane.gap{height:4px}
.i-lock{width:9px;height:11px;margin-right:5px}
.tn{width:32px;height:24px;line-height:25px;padding-right:3px;text-align:center;color:#999}
.tn.on{background:#095588;color:#a9c3d6}
.sy{width:27px;height:24px;display:grid;place-items:center;background:#202020}
.sy svg{width:12px;height:9px}
.i-eye{width:13px;height:9px;margin-left:7px}
.ms{width:27px;text-align:center;font-size:10.500px}
.i-mic{width:9px;height:14px;margin-left:9px;color:#4a4a4a}
.master>.t:nth-child(2){color:#8f8f8f;margin:0 41px 0 4px}
.i-bow{width:11px;height:9px;margin:-8px 0 0 59px}
.lanes{position:relative}
.rl{font-size:10.500px;fill:#b5b5b5}
.lane{height:25px;border-bottom:1px solid #303030;background:linear-gradient(90deg,#202020 379px,#1b1b1b 379px)}
.lane.full{background:linear-gradient(90deg,#202020 379px,#414141 379px)}
.lane.top{border:0;background:linear-gradient(90deg,#202020 379px,#1b1b1b 379px)}
.lane.top em{width:379px;height:80px;border-bottom:1px solid #303030}
.lane.gap{background:#262626}
.lane.rest{height:54px;border:0}
.clip{width:378px;height:24px;background:#e383e3;display:flex;padding:2px 0 0 11px;color:#2a162a;font-size:10px}
.badge{width:11px;height:9px;margin:2px 7px 0 0;background:#129a20;color:#0b3a0e;font:italic 9px/9px "Liberation Sans",sans-serif;text-align:center}
.playhead{position:absolute;left:183px;top:44px;width:1.100px;height:331px;background:#2d8ceb}
.vbars{padding:64px 0 0 1px}
.vbar{width:10px;background:#303030;border-radius:5px;display:flex;flex-direction:column;justify-content:space-between;align-items:center;padding:3px 0}
.vbar.one{height:152px}.vbar.two{height:154px;margin-top:5px}
.hbar{height:12px;margin:0 23px 0 14px;border:solid #303030;border-width:1px 0;background:#1b1b1b}
.hb{width:60px;height:10px;background:#303030;border-radius:5px;display:flex;justify-content:space-between;align-items:center}
.meters{width:63px;background:#232323}
.ml{font-size:9.500px;fill:#999}
.status{height:19px;background:#262626;display:flex;align-items:center;padding:0 0 2px 3px}
.i-cc{width:15px;height:11px;margin-right:39px;color:#777}

.toast{position:absolute;left:4082px;top:994px;width:396px;height:43px;background:linear-gradient(#545454,#3c3c3c);color:#fff;font:14px/18px "Open Sans","Noto Sans",sans-serif;padding:4px 0 0 8px;overflow:hidden;border-bottom:1px solid #222}
.toast .t{display:block}
.toast .t+.t{line-height:16px}
.box{position:absolute;border:4.400px solid #3bcff5;border-radius:4px}
.b1{left:0;top:27px;width:1317px;height:1030px}
.b2{left:1320px;top:27px;width:600px;height:745px}
.b3{left:1317px;top:772px;width:604px;height:290px}
.b4{left:1920px;top:47px;width:1344px;height:541px}
.b5{left:3267px;top:47px;width:1211px;height:541px}
.b6{left:1920px;top:601px;width:49px;height:417px}
.b7{left:1972px;top:618px;width:2439px;height:401px}
.b8{left:4411px;top:599px;width:65px;height:417px}
.b9{left:1919px;top:1018px;width:2563px;height:23px}
.arrow{position:absolute;left:1954px;top:929px}
.label{position:absolute;transform:translate(-50%,-50%);white-space:nowrap;color:#fff;font:700 33.500px/36px "Liberation Sans",Arial,sans-serif;-webkit-text-stroke:5.500px #f23a3a;paint-order:stroke fill}
.small{font-size:15px;line-height:18px;-webkit-text-stroke-width:4px}
.l1{left:660.500px;top:431px}.l2{left:1487.500px;top:297px}.l3{left:1652px;top:898px}.l4{left:2384px;top:299px}.l5{left:3479px;top:314px}
.l6{left:2014px;top:969px}.l7{left:2459.500px;top:734px}.l8{left:4443.500px;top:664px}.l9{left:2348.500px;top:1028px}
```
FILE: app.js
```js
const app = document.querySelector('.app');
const scale = app.getBoundingClientRect().width / 4478;
document.querySelectorAll('.t[data-w]').forEach(el => {
  const range = document.createRange();
  range.selectNodeContents(el);
  const target = parseFloat(el.dataset.w);
  const width = range.getBoundingClientRect().width / scale;
  el.style.letterSpacing = ((target - width) / el.textContent.length).toFixed(3) + 'px';
  el.style.width = target + 'px';
});

const NS = 'http://www.w3.org/2000/svg';
function label(parent, x, y, text, length) {
  const t = document.createElementNS(NS, 'text');
  t.setAttribute('x', x);
  t.setAttribute('y', y);
  if (length) {
    t.setAttribute('textLength', length);
    t.setAttribute('lengthAdjust', 'spacingAndGlyphs');
  }
  t.textContent = text;
  parent.appendChild(t);
}

// Program monitor ruler
let d = '';
for (let i = 0; i < 29; i++) {
  d += `M${(13.5 + i * 40.64).toFixed(1)} ${i % 5 ? 15.5 : 10}V21`;
}
document.getElementById('pticks').setAttribute('d', d);

// Timeline ruler
d = '';
for (let i = 0; i <= 166; i++) {
  d += `M${(0.5 + i * 13.07).toFixed(1)} ${i % 15 ? 39 : 33}V45`;
}
document.getElementById('tticks').setAttribute('d', d);
const labels = document.getElementById('tlabels');
label(labels, 0.5, 29, ':00:00', 29.5);
for (let i = 1; i <= 10; i++) {
  const code = `00:00:0${Math.floor(i / 2)}:${i % 2 ? '15' : '00'}`;
  label(labels, (i * 196.05 - 27.5).toFixed(1), 29, code, 57);
}
label(labels, 2129.5, 29, '00:00:05:', 46);

// Audio meter scale
const meter = document.getElementById('mlabels');
d = '';
for (let i = 0; i <= 60; i++) {
  d += `M30.500 ${(37 + i * 5.89).toFixed(1)}h${i % 6 ? 2 : 4}`;
}
document.getElementById('mticks').setAttribute('d', d);
['0', '-6', '-12', '-18', '-24', '-30', '-36', '-42', '-48', '-54', 'dB'].forEach((s, i) => {
  label(meter, i === 10 ? 38 : 37, (40.5 + i * 35.2).toFixed(1), s, s.length > 2 ? 13 : 0);
});
```
